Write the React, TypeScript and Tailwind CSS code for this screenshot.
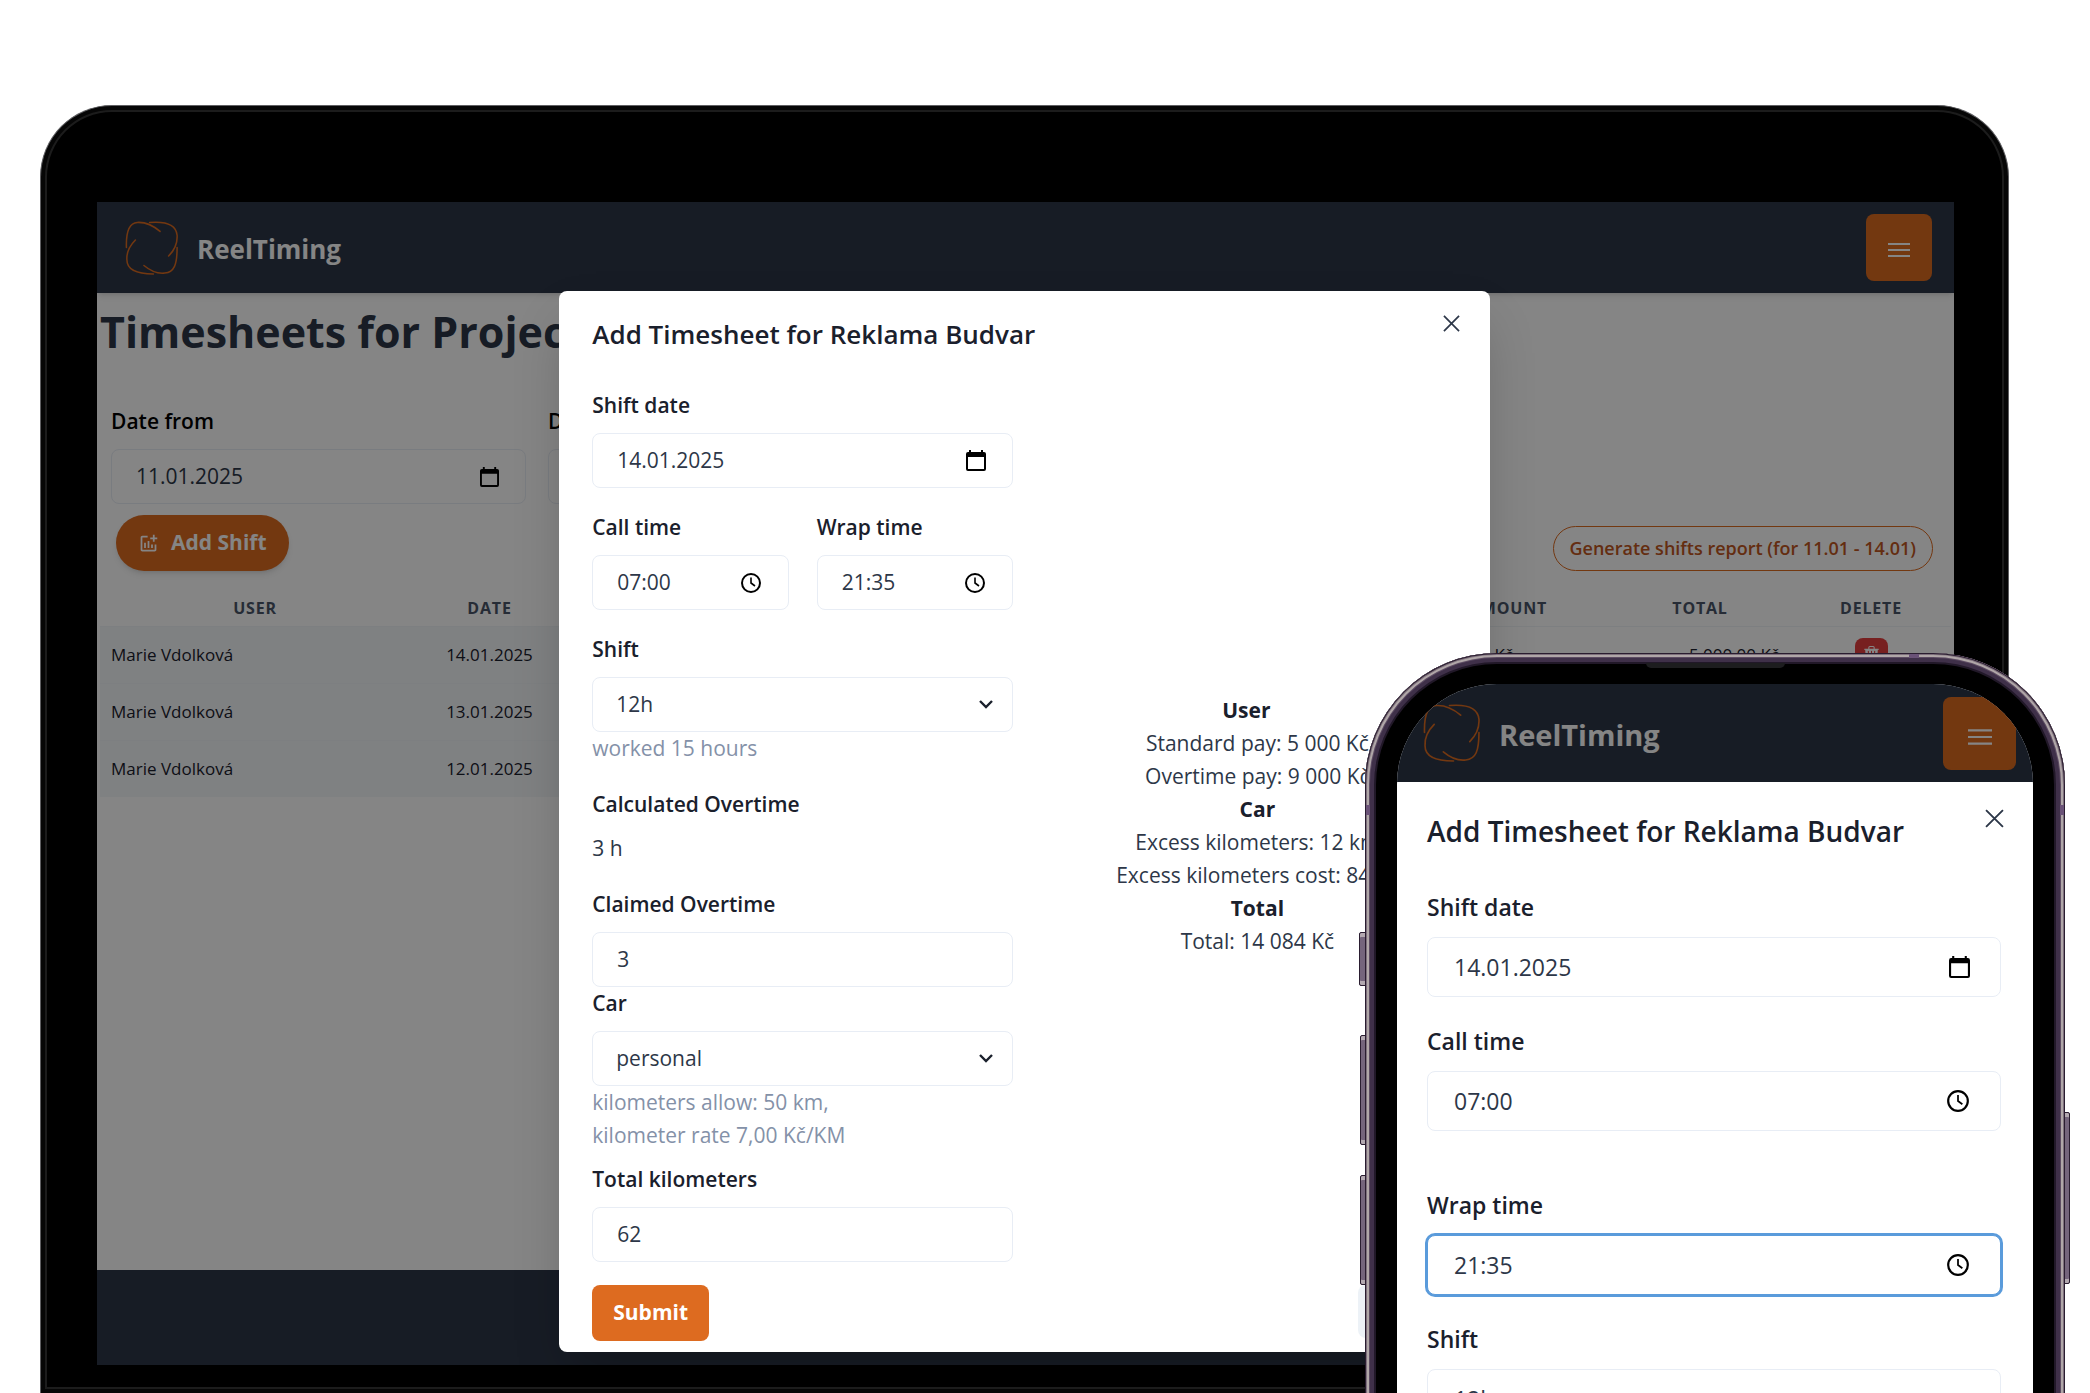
import { useId } from "react";
import type { ReactNode } from "react";
import { BsTrash3Fill } from "react-icons/bs";
import { MdOutlineAddchart } from "react-icons/md";

type Size = "laptop" | "phone";

function Logo({ className }: { className: string }) {
  return (
    <svg viewBox="8 9 57 57" className={className} fill="none" stroke="#DD6B20" strokeWidth="1.6" strokeLinecap="round" aria-hidden="true">
      <path d="M9.5 37C9 22 12 11 21 10.5C30 10 38 14 45 20" />
      <path d="M34 10.5C52 9 62 13 63 24C63.5 32 60 40 54 46" />
      <path d="M63 37C63 55 60 63 50 64C42 65 34 61 28 56" />
      <path d="M38 65C20 65 10 60 10 50C9.5 43 13 35 19 29" />
    </svg>
  );
}

function CalendarIcon({ className }: { className: string }) {
  return (
    <svg viewBox="0 0 20 21" className={className} aria-hidden="true">
      <path fill="#000" fillRule="evenodd" d="M3 0h2v2h10V0h2v2h1a2 2 0 0 1 2 2v15a2 2 0 0 1-2 2H2a2 2 0 0 1-2-2V4a2 2 0 0 1 2-2h1zM2 7v12h16V7z" />
    </svg>
  );
}

function ClockIcon({ className }: { className: string }) {
  return (
    <svg viewBox="0 0 22 22" className={className} fill="none" stroke="#000" strokeWidth="2" aria-hidden="true">
      <circle cx="11" cy="11" r="9" />
      <path d="M11 5.5V11l4 3" strokeWidth="1.6" />
    </svg>
  );
}

function ChevronIcon() {
  return (
    <svg viewBox="0 0 14 9" className="h-[9px] w-[14px] shrink-0" fill="none" stroke="#1A202C" strokeWidth="2.4" aria-hidden="true">
      <path d="M1 1l6 6 6-6" />
    </svg>
  );
}

function CloseIcon({ className }: { className: string }) {
  return (
    <svg viewBox="0 0 18 18" className={className} fill="none" stroke="#2D3748" strokeWidth="1.8" aria-hidden="true">
      <path d="M1 1l16 16M17 1L1 17" />
    </svg>
  );
}

function MenuIcon({ className }: { className: string }) {
  return (
    <svg viewBox="0 0 22 16" className={className} fill="none" stroke="#fff" strokeWidth="2" aria-hidden="true">
      <path d="M0 2h22M0 8h22M0 14h22" />
    </svg>
  );
}

type FieldProps = {
  label: string;
  value: string;
  icon?: ReactNode;
  size?: Size;
  focused?: boolean;
};

function Field({ label, value, icon, size = "laptop", focused = false }: FieldProps) {
  const id = useId();
  const phone = size === "phone";
  return (
    <div className={phone ? "flex flex-col gap-3" : "flex min-w-0 flex-col gap-[11px]"}>
      <label htmlFor={id} className={phone ? "text-[23px] leading-9 font-semibold" : "text-[21px] leading-[33px] font-semibold"}>
        {label}
      </label>
      <div
        className={
          (phone ? "h-[60px] pr-[30px] pl-[26px] " : "h-[55px] pr-[26px] pl-6 ") +
          "flex items-center rounded-lg border bg-white " +
          (focused ? "border-[#5A9BDB] ring-2 ring-[#5A9BDB]" : "border-[#E8EDF5]")
        }
      >
        <input
          id={id}
          type="text"
          defaultValue={value}
          className={(phone ? "text-[23px] " : "text-[21px] ") + "w-full min-w-0 flex-1 bg-transparent text-[#2D3748] outline-none"}
        />
        {icon}
      </div>
    </div>
  );
}

function SelectField({ label, value, hint, size = "laptop" }: { label: string; value: string; hint?: ReactNode; size?: Size }) {
  const id = useId();
  const phone = size === "phone";
  return (
    <div className="flex flex-col">
      <label htmlFor={id} className={phone ? "mb-3 text-[23px] leading-9 font-semibold" : "mb-[11px] text-[21px] leading-[33px] font-semibold"}>
        {label}
      </label>
      <div className={(phone ? "h-[60px] pr-6 pl-[26px] " : "h-[55px] pr-[19px] pl-[23px] ") + "flex items-center rounded-lg border border-[#E8EDF5] bg-white"}>
        <select
          id={id}
          defaultValue={value}
          className={(phone ? "text-[23px] " : "text-[21px] ") + "min-w-0 flex-1 appearance-none bg-transparent text-[#2D3748] outline-none"}
        >
          <option>{value}</option>
        </select>
        <ChevronIcon />
      </div>
      {hint && <p className="text-[21px] leading-[33px] text-[#8491A8]">{hint}</p>}
    </div>
  );
}

function ShiftsTable() {
  const rows = [
    { user: "Marie Vdolková", date: "14.01.2025" },
    { user: "Marie Vdolková", date: "13.01.2025" },
    { user: "Marie Vdolková", date: "12.01.2025" },
  ];
  return (
    <table className="mt-5 w-full table-fixed border-collapse text-[17px]">
      <colgroup>
        <col className="w-[310px]" />
        <col className="w-[159px]" />
        <col />
        <col className="w-[202px]" />
        <col className="w-[182px]" />
        <col className="w-[160px]" />
      </colgroup>
      <thead>
        <tr className="h-[35px] text-[16px] tracking-wider text-[#4A5568] uppercase">
          <th scope="col">User</th>
          <th scope="col">Date</th>
          <th scope="col">Shift</th>
          <th scope="col">Amount</th>
          <th scope="col">Total</th>
          <th scope="col">Delete</th>
        </tr>
      </thead>
      <tbody className="text-[#1A202C]">
        {rows.map((row) => (
          <tr key={row.date} className="h-[57px] border-t border-[#F0F3F8]">
            <td className="bg-[#F4F7FA] pl-[11px]">{row.user}</td>
            <td className="bg-[#F4F7FA] text-center">{row.date}</td>
            <td className="bg-[#F4F7FA] text-center">12h</td>
            <td className="pr-24 text-right">0,00 Kč</td>
            <td className="pr-3 text-right">5 000,00 Kč</td>
            <td className="text-center">
              <button type="button" aria-label="Delete shift" className="inline-flex h-[33px] w-[33px] items-center justify-center rounded-lg bg-[#E53E3E] text-[17px] text-white">
                <BsTrash3Fill />
              </button>
            </td>
          </tr>
        ))}
      </tbody>
    </table>
  );
}

function TimesheetsPage() {
  return (
    <div className="flex flex-col bg-white [grid-area:1/1]">
      <header className="flex h-[91px] items-center justify-between bg-[#2D3748] pr-[22px] pl-7 shadow-md">
        <div className="flex items-center gap-[18px]">
          <Logo className="h-[54px] w-[54px]" />
          <span className="pt-1 text-[26px] font-bold text-white">ReelTiming</span>
        </div>
        <button type="button" aria-label="Open menu" className="flex h-[67px] w-[66px] items-center justify-center rounded-lg bg-[#DD6B20] pt-1">
          <MenuIcon className="h-4 w-[22px]" />
        </button>
      </header>
      <div className="flex-1 px-[3px] pb-10">
        <h1 className="mt-2 text-[43px] leading-[62px] font-bold whitespace-nowrap text-[#2D3748]">Timesheets for Project</h1>
        <div className="mt-[42px] grid w-[874px] grid-cols-2 gap-[22px] px-[11px]">
          <Field label="Date from" value="11.01.2025" icon={<CalendarIcon className="h-[20px] w-[19px] shrink-0" />} />
          <Field label="Date to" value="14.01.2025" icon={<CalendarIcon className="h-[20px] w-[19px] shrink-0" />} />
        </div>
        <div className="mt-[11px] flex items-end justify-between pr-[18px] pl-4">
          <button type="button" className="flex h-14 items-center gap-3 rounded-full bg-[#DD6B20] px-[22px] text-[21px] font-bold text-white shadow-md">
            <MdOutlineAddchart />
            Add Shift
          </button>
          <button type="button" className="h-[45px] rounded-full border border-[#DD6B20] px-4 text-[18px] font-semibold text-[#C05621]">
            Generate shifts report (for 11.01 - 14.01)
          </button>
        </div>
        <ShiftsTable />
      </div>
      <footer className="h-[95px] bg-[#2D3748]" />
    </div>
  );
}

function Summary() {
  return (
    <div className="text-center text-[21px] leading-[33px] whitespace-nowrap text-[#2D3748]">
      <p className="pr-[22px] font-bold text-[#1A202C]">User</p>
      <p>Standard pay: 5 000 Kč</p>
      <p>Overtime pay: 9 000 Kč</p>
      <p className="font-bold text-[#1A202C]">Car</p>
      <p>Excess kilometers: 12 km</p>
      <p>Excess kilometers cost: 84 Kč</p>
      <p className="font-bold text-[#1A202C]">Total</p>
      <p>Total: 14 084 Kč</p>
    </div>
  );
}

function TimesheetDialog() {
  return (
    <section
      aria-label="Add Timesheet"
      className="relative mt-[89px] mr-[2px] mb-[13px] w-[calc(50%+2px)] justify-self-center rounded-lg bg-white pb-[11px] text-[#1A202C] shadow-2xl [grid-area:1/1]"
    >
      <div className="flex items-start justify-between pt-[23px] pr-[30px] pl-[33px]">
        <h2 className="text-[26px] leading-10 font-semibold">Add Timesheet for Reklama Budvar</h2>
        <button type="button" aria-label="Close" className="pt-px">
          <CloseIcon className="h-[17px] w-[17px]" />
        </button>
      </div>
      <form className="pr-8 pl-[33px]">
        <div className="mt-[35px] grid grid-cols-[21fr_20fr] items-center gap-11">
          <div className="flex flex-col">
            <div className="flex flex-col gap-[23px]">
              <Field label="Shift date" value="14.01.2025" icon={<CalendarIcon className="h-[21px] w-5 shrink-0" />} />
              <div className="grid grid-cols-2 gap-7">
                <Field label="Call time" value="07:00" icon={<ClockIcon className="h-[22px] w-[22px] shrink-0" />} />
                <Field label="Wrap time" value="21:35" icon={<ClockIcon className="h-[22px] w-[22px] shrink-0" />} />
              </div>
              <SelectField label="Shift" value="12h" hint="worked 15 hours" />
              <div className="flex flex-col gap-[11px] text-[21px] leading-[33px]">
                <span className="font-semibold">Calculated Overtime</span>
                <span className="text-[#2D3748]">3 h</span>
              </div>
              <Field label="Claimed Overtime" value="3" />
            </div>
            <SelectField
              label="Car"
              value="personal"
              hint={
                <>
                  kilometers allow: 50 km,
                  <br />
                  kilometer rate 7,00 Kč/KM
                </>
              }
            />
            <div className="mt-[11px]">
              <Field label="Total kilometers" value="62" />
            </div>
          </div>
          <Summary />
        </div>
        <div className="mt-[23px] flex justify-between">
          <button type="button" className="h-14 rounded-lg bg-[#DD6B20] px-[21px] text-[21px] font-bold text-white">
            Submit
          </button>
          <button type="button" aria-label="Close dialog" className="h-[53px] w-[100px] rounded-lg bg-[#EDF2F7]" />
        </div>
      </form>
    </section>
  );
}

function Laptop() {
  return (
    <div className="mr-[81px] ml-10 rounded-t-[72px] border border-b-0 border-[#5f5f62] bg-black pt-[96px] pr-[54px] pb-7 pl-14 shadow-[inset_0_0_0_4px_#060606,inset_0_0_0_6px_#1c1c1c]">
      <div className="grid overflow-hidden">
        <TimesheetsPage />
        <div className="bg-black/48 [grid-area:1/1]" />
        <TimesheetDialog />
      </div>
    </div>
  );
}

function SideButton({ className }: { className: string }) {
  return <span className={"absolute w-2 rounded-xs border border-[#2a1d30] bg-[#75657c] shadow-[inset_0_4px_0_#b3a9b0,inset_0_-4px_0_#b3a9b0] " + className} />;
}

function Phone() {
  return (
    <div className="absolute top-[653px] right-[25px] bottom-0 z-20 w-[700px]">
      <SideButton className="top-[279px] -left-[6px] h-[54px]" />
      <SideButton className="top-[382px] -left-[5px] h-[110px]" />
      <SideButton className="top-[522px] -left-[5px] h-[110px]" />
      <SideButton className="top-[459px] -right-[5px] h-[172px]" />
      <div className="relative -mb-4 h-[calc(100%+16px)] overflow-hidden rounded-t-[132px] bg-black px-8 pt-[31px] shadow-[inset_0_0_0_1px_#2a1d30,inset_0_0_0_2px_#7d6f7b,inset_0_0_0_4px_#b0a7a8,inset_0_0_0_5px_#5d4c63,inset_0_0_0_9px_#3f3049,inset_0_0_0_11px_#211828]">
        <span className="absolute top-[10px] left-[281px] h-[5px] w-[139px] rounded-b-md bg-[#1d1d1f]" />
        <span className="absolute top-px right-[146px] h-1 w-[10px] bg-[#6a5277]" />
        <span className="absolute top-[152px] left-px h-[10px] w-1 bg-[#6a5277]" />
        <span className="absolute top-[152px] right-px h-[10px] w-1 bg-[#6a5277]" />
        <div className="h-full overflow-hidden rounded-t-[100px] bg-white">
          <header className="relative flex h-[98px] items-center justify-between bg-[#2D3748] pr-[17px] pl-[26px]">
            <div className="flex items-center gap-[18px]">
              <Logo className="h-[58px] w-[58px]" />
              <span className="pt-1 text-[29px] font-bold text-white">ReelTiming</span>
            </div>
            <button type="button" aria-label="Open menu" className="flex h-[73px] w-[73px] items-center justify-center rounded-lg bg-[#DD6B20] pt-2">
              <MenuIcon className="h-[18px] w-6" />
            </button>
            <div className="absolute inset-0 bg-black/48" />
          </header>
          <section aria-label="Add Timesheet on phone" className="text-[#1A202C]">
            <div className="flex items-start justify-between pt-[27px] pr-[29px] pl-[30px]">
              <h2 className="text-[28px] leading-[44px] font-semibold">Add Timesheet for Reklama Budvar</h2>
              <button type="button" aria-label="Close">
                <CloseIcon className="h-[19px] w-[19px]" />
              </button>
            </div>
            <form className="mt-9 flex flex-col gap-[26px] pr-8 pl-[30px]">
              <Field size="phone" label="Shift date" value="14.01.2025" icon={<CalendarIcon className="h-[22px] w-[21px] shrink-0" />} />
              <Field size="phone" label="Call time" value="07:00" icon={<ClockIcon className="h-6 w-6 shrink-0" />} />
              <div className="mt-[30px]">
                <Field size="phone" focused label="Wrap time" value="21:35" icon={<ClockIcon className="h-6 w-6 shrink-0" />} />
              </div>
              <SelectField size="phone" label="Shift" value="12h" />
            </form>
          </section>
        </div>
      </div>
    </div>
  );
}

export default function App() {
  return (
    <main className="relative min-h-screen overflow-hidden bg-white pt-[105px] font-['Open_Sans','Noto_Sans',sans-serif]">
      <Laptop />
      <Phone />
    </main>
  );
}
